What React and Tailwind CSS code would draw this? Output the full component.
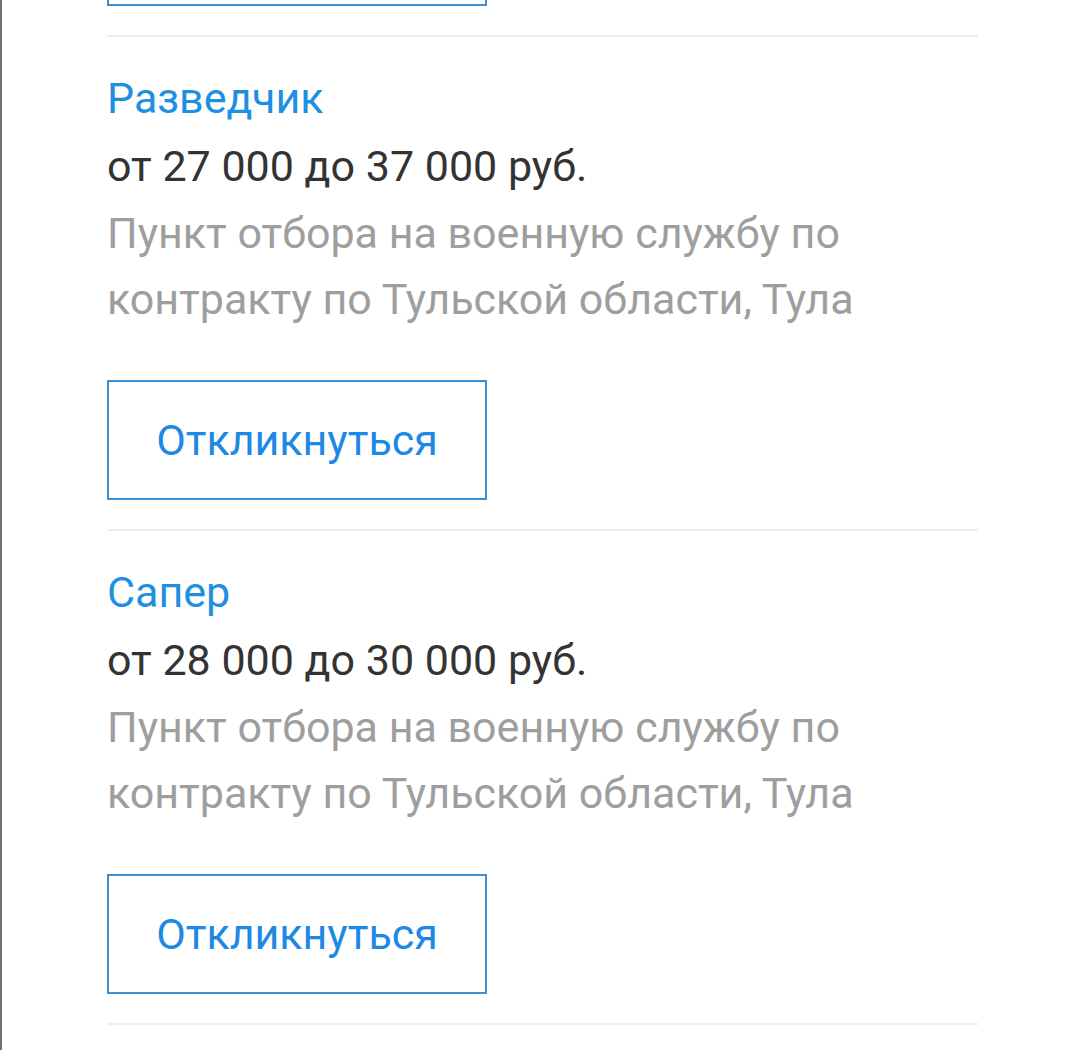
const jobs = [
  {
    title: 'Разведчик',
    salary: 'от 27 000 до 37 000 руб.',
    place: 'Пункт отбора на военную службу по контракту по Тульской области, Тула',
  },
  {
    title: 'Сапер',
    salary: 'от 28 000 до 30 000 руб.',
    place: 'Пункт отбора на военную службу по контракту по Тульской области, Тула',
  },
]

function RespondButton() {
  return (
    <button className="w-[380px] h-[120px] border-2 border-[#3b8fd6] text-[#1e88e5] text-[43px] bg-white">
      Откликнуться
    </button>
  )
}

export default function App() {
  return (
    <div className="w-[1080px] h-[1050px] overflow-hidden bg-white border-l-2 border-[#727272] font-['Roboto',sans-serif]">
      <div className="pl-[105px] pr-[102px]">
        {/* bottom edge of the previous card's button */}
        <div className="pb-[29px]">
          <div className="w-[380px] h-[6px] border-2 border-t-0 border-[#3b8fd6]" />
        </div>
        {jobs.map((job, i) => (
          <div key={i} className="border-t-2 border-[#eeeeee] pt-[27px] pb-[29px]">
            <div className="text-[43px] leading-[68px] text-[#1e8fe1]">{job.title}</div>
            <div className="text-[43px] leading-[68px] text-[#333333]">{job.salary}</div>
            <p className="text-[43px] leading-[66px] text-[#9e9e9e] w-[780px]">{job.place}</p>
            <div className="mt-[48px]">
              <RespondButton />
            </div>
          </div>
        ))}
        <div className="border-t-2 border-[#eeeeee]" />
      </div>
    </div>
  )
}
